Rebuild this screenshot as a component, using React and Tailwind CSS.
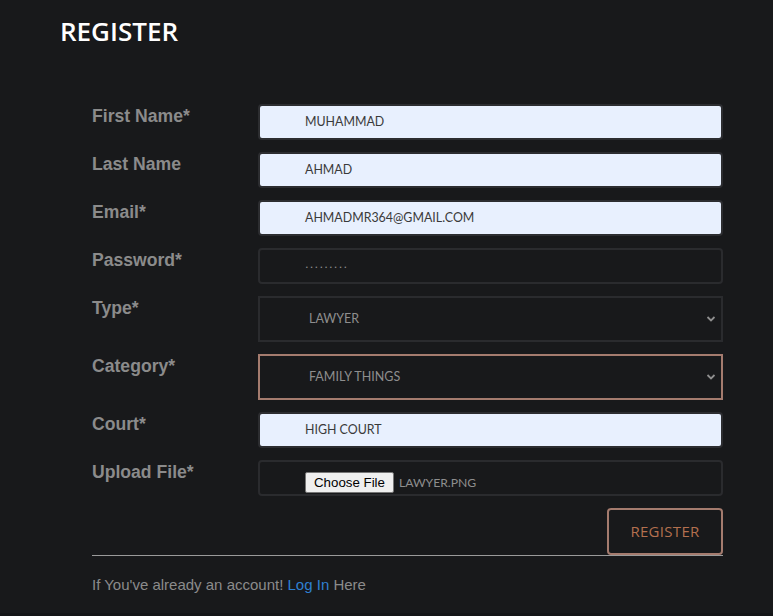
import React from "react";

const labelCls =
  "w-[166px] shrink-0 pt-[2px] text-[17.6px] leading-[20px] font-bold text-[#8b8b8b] font-['Liberation_Sans',Arial,sans-serif]";
const valFont = "font-['Lato',sans-serif]";

function Chevron() {
  return (
    <svg width="10" height="7" viewBox="0 0 10 7" className="absolute right-[5px] top-1/2 -translate-y-1/2">
      <path d="M1.5 1.5 L5 5 L8.5 1.5" fill="none" stroke="#8e8e8e" strokeWidth="1.8" />
    </svg>
  );
}

function Row({ label, children }) {
  return (
    <div className="flex items-start">
      <div className={labelCls}>{label}</div>
      <div className="flex-1">{children}</div>
    </div>
  );
}

function FilledInput({ value }) {
  return (
    <div
      className={`h-[36px] rounded-[4px] border-2 border-[#2c2d30] bg-[#e8f0fe] pl-[45px] flex items-center text-[12.4px] text-[#3a3a3a] ${valFont}`}
    >
      {value}
    </div>
  );
}

function SelectBox({ value, accent }) {
  return (
    <div
      className={`relative h-[46px] border-2 ${accent ? "border-[#a47b6e]" : "border-[#2a2b2e]"} pl-[49px] flex items-center text-[12.5px] text-[#8e8e8e] ${valFont}`}
    >
      {value}
      <Chevron />
    </div>
  );
}

export default function App() {
  return (
    <div className="w-full min-h-[616px] bg-[#141517]">
      <div className="h-[613px] bg-[#18191b]">
        <div className="pl-[60px] pt-[14px]">
          <h1 className="text-[26px] leading-[34px] font-semibold text-white font-['Open_Sans',sans-serif]">
            REGISTER
          </h1>
        </div>
        <div className="ml-[92px] w-[631px] mt-[56px] flex flex-col gap-[12px]">
          <Row label="First Name*">
            <FilledInput value="MUHAMMAD" />
          </Row>
          <Row label="Last Name">
            <FilledInput value="AHMAD" />
          </Row>
          <Row label="Email*">
            <FilledInput value="AHMADMR364@GMAIL.COM" />
          </Row>
          <Row label="Password*">
            <div className="h-[36px] rounded-[4px] border-2 border-[#2a2b2e] pl-[45px] flex items-center text-[#8e8e8e] text-[13px] tracking-[1.2px] font-['Liberation_Sans',sans-serif]">
              <span className="-mt-[4px]">.........</span>
            </div>
          </Row>
          <Row label="Type*">
            <SelectBox value="LAWYER" />
          </Row>
          <Row label="Category*">
            <SelectBox value="FAMILY THINGS" accent />
          </Row>
          <Row label="Court*">
            <FilledInput value="HIGH COURT" />
          </Row>
          <Row label="Upload File*">
            <div className="h-[36px] rounded-[4px] border-2 border-[#2a2b2e] pl-[45px] flex items-end pb-[1px]">
              <span className="h-[21px] px-[8px] flex items-center bg-[#efefef] border border-[#767676] rounded-[2px] text-[13.3px] text-black font-['Liberation_Sans',sans-serif]">
                Choose File
              </span>
              <span className={`ml-[5px] self-end mb-[1px] text-[12.2px] leading-[19px] text-[#8e8e8e] ${valFont}`}>
                LAWYER.PNG
              </span>
            </div>
          </Row>
          <div className="flex justify-end">
            <button className="w-[116px] h-[47px] rounded-[4px] border-2 border-[#a47b6e] text-[15px] text-[#b3704f] font-['Open_Sans',sans-serif] tracking-[0.3px]">
              REGISTER
            </button>
          </div>
        </div>
        <div className="ml-[92px] w-[631px] border-t border-[#9a9a9a]" />
        <p className="ml-[92px] mt-[20px] text-[15px] leading-[18px] text-[#8b8b8b] font-['Liberation_Sans',sans-serif]">
          If You've already an account! <span className="text-[#2f80d1]">Log In</span> Here
        </p>
      </div>
    </div>
  );
}
